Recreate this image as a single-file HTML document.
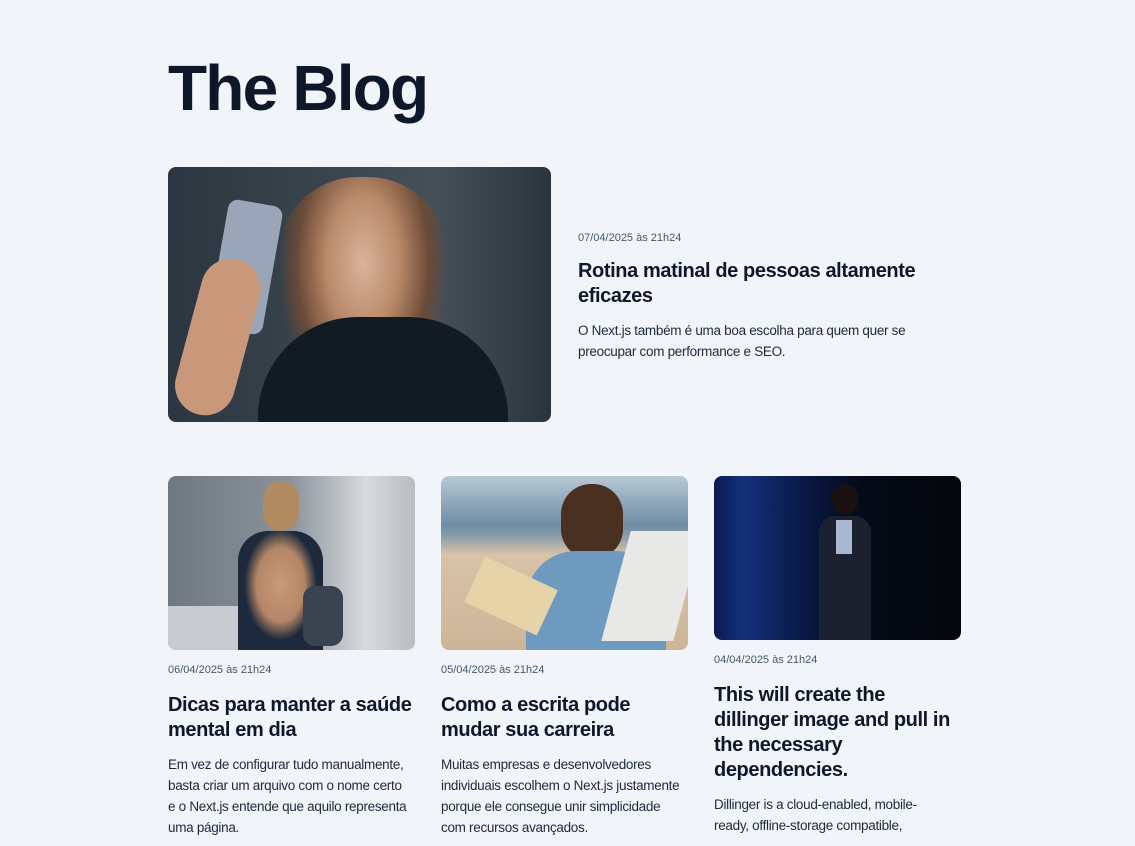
<!DOCTYPE html>
<html><head><meta charset="utf-8"><style>
*{margin:0;padding:0;box-sizing:border-box}
body{width:1135px;height:846px;overflow:hidden;background:#f1f5f9;font-family:"Liberation Sans",sans-serif;color:#0f172a;position:relative}
h1{position:absolute;left:168px;top:52px;font-size:64px;font-weight:700;letter-spacing:-1.8px;line-height:72px;color:#0f172a}
.img{position:absolute;border-radius:8px;overflow:hidden}
.date{position:absolute;font-size:11px;color:#475569}
.t{position:absolute;font-size:20px;font-weight:700;line-height:25px;color:#0f172a;letter-spacing:-0.4px}
.d{position:absolute;font-size:13.5px;line-height:21px;color:#1e293b;letter-spacing:-0.3px}
</style></head><body>
<h1>The Blog</h1>

<div class="img" style="left:168px;top:167px;width:383px;height:255px;background:linear-gradient(90deg,#2b3640 0%,#3a444c 40%,#465058 70%,#2a343c 100%)">
  <div style="position:absolute;left:110px;top:10px;width:170px;height:245px;border-radius:80px 80px 0 0;background:radial-gradient(ellipse at 50% 35%,#d9b49a 0%,#b98a6a 30%,#6b4a36 55%,transparent 70%)"></div>
  <div style="position:absolute;left:90px;top:150px;width:250px;height:120px;border-radius:100px 100px 0 0;background:#121a24"></div>
  <div style="position:absolute;left:50px;top:35px;width:55px;height:130px;border-radius:10px;background:#9aa6b8;transform:rotate(10deg)"></div>
  <div style="position:absolute;left:20px;top:90px;width:60px;height:160px;border-radius:30px;background:#c9987a;transform:rotate(15deg)"></div>
</div>
<div class="date" style="left:578px;top:232px">07/04/2025 às 21h24</div>
<div class="t" style="left:578px;top:259px;width:360px">Rotina matinal de pessoas altamente eficazes</div>
<div class="d" style="left:578px;top:320px;width:345px">O Next.js também é uma boa escolha para quem quer se preocupar com performance e SEO.</div>

<div class="img" style="left:168px;top:476px;width:247px;height:174px;background:linear-gradient(90deg,#6f7780 0%,#8a929b 50%,#d8dadc 80%,#b9bcc0 100%)">
  <div style="position:absolute;left:0;top:130px;width:80px;height:44px;background:#c8ccd2"></div>
  <div style="position:absolute;left:95px;top:5px;width:36px;height:50px;border-radius:18px;background:#b08a60"></div>
  <div style="position:absolute;left:70px;top:55px;width:85px;height:119px;border-radius:30px 30px 0 0;background:radial-gradient(ellipse at 50% 45%,#c99a7a 0%,#b48566 40%,#1e2a3c 60%)"></div>
  <div style="position:absolute;left:135px;top:110px;width:40px;height:60px;border-radius:12px;background:#3a4450"></div>
</div>
<div class="date" style="left:168px;top:664px">06/04/2025 às 21h24</div>
<div class="t" style="left:168px;top:693px;width:250px">Dicas para manter a saúde mental em dia</div>
<div class="d" style="left:168px;top:754px;width:250px">Em vez de configurar tudo manualmente,<br>basta criar um arquivo com o nome certo<br>e o Next.js entende que aquilo representa<br>uma página.</div>

<div class="img" style="left:441px;top:476px;width:247px;height:174px;background:linear-gradient(180deg,#b8c8d4 0%,#6f8ea6 28%,#7f97a8 33%,#d7c3a8 45%,#cdb497 100%)">
  <div style="position:absolute;left:120px;top:8px;width:62px;height:75px;border-radius:30px;background:#4a3020"></div>
  <div style="position:absolute;left:85px;top:75px;width:140px;height:99px;border-radius:50px 50px 0 0;background:#6f9ac0"></div>
  <div style="position:absolute;left:175px;top:55px;width:72px;height:110px;background:#e8e8e6;transform:skewX(-15deg)"></div>
  <div style="position:absolute;left:30px;top:95px;width:80px;height:50px;background:#e6d4a8;transform:rotate(25deg)"></div>
</div>
<div class="date" style="left:441px;top:664px">05/04/2025 às 21h24</div>
<div class="t" style="left:441px;top:693px;width:250px">Como a escrita pode mudar sua carreira</div>
<div class="d" style="left:441px;top:754px;width:252px">Muitas empresas e desenvolvedores<br>individuais escolhem o Next.js justamente<br>porque ele consegue unir simplicidade<br>com recursos avançados.</div>

<div class="img" style="left:714px;top:476px;width:247px;height:164px;background:linear-gradient(90deg,#0a1a50 0%,#12307a 12%,#0a1a48 35%,#050a18 60%,#03060c 100%)">
  <div style="position:absolute;left:118px;top:8px;width:26px;height:30px;border-radius:13px;background:#1a1210"></div>
  <div style="position:absolute;left:105px;top:40px;width:52px;height:124px;border-radius:16px 16px 0 0;background:#1c2130"></div>
  <div style="position:absolute;left:122px;top:44px;width:16px;height:34px;background:#a8b8d0"></div>
</div>
<div class="date" style="left:714px;top:654px">04/04/2025 às 21h24</div>
<div class="t" style="left:714px;top:683px;width:248px">This will create the<br>dillinger image and pull in<br>the necessary<br>dependencies.</div>
<div class="d" style="left:714px;top:794px;width:225px">Dillinger is a cloud-enabled, mobile-<br>ready, offline-storage compatible,</div>
</body></html>
